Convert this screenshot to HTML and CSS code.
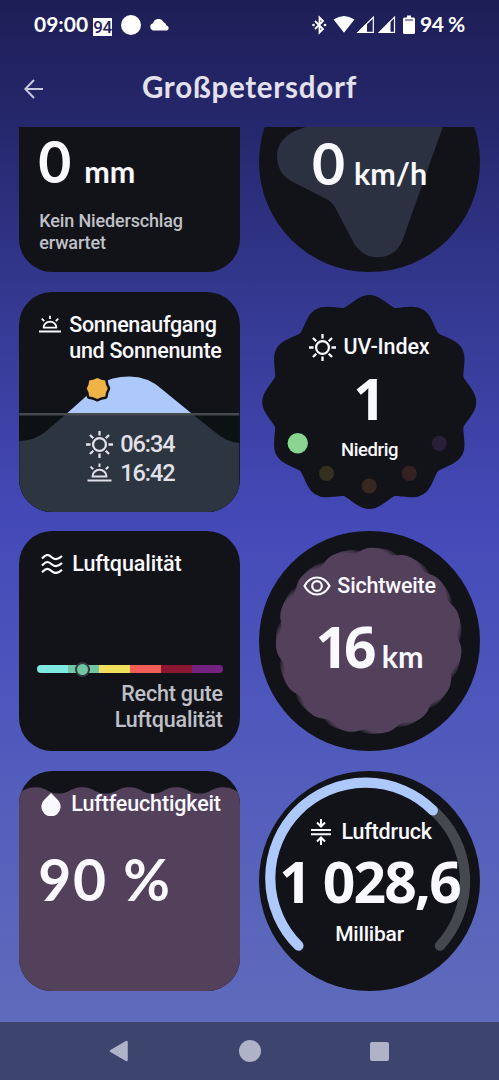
FILE: index.html
```html
<!DOCTYPE html>
<html lang="de">
<head>
<meta charset="utf-8">
<title>Großpetersdorf</title>
<link rel="stylesheet" href="styles.css">
</head>
<body>
<svg width="0" height="0" class="defs">
  <defs>
    <symbol id="sun" viewBox="0 0 26 26"><g fill="none" stroke="currentColor" stroke-width="2.2"><circle cx="13" cy="13" r="6.2"/><path d="M13 0v4.4M13 21.6V26M0 13h4.4M21.6 13H26M3.8 3.8l3.2 3.2M19 19l3.2 3.2M22.2 3.8L19 7M7 19l-3.2 3.2"/></g></symbol>
    <symbol id="rise" viewBox="0 0 24 20"><g fill="none" stroke="currentColor" stroke-width="2"><path d="M0 17.6h24M4.2 13.4h15.6M5 13.4a7 6.6 0 0 1 14 0M12 .5v3.6M3 3.6l2.7 2.7M21 3.6l-2.7 2.7"/></g></symbol>
    <path id="petal" d="M0 0L-30 -92.5C-24 -93.5-22 -96.500-12 -103Q0 -111 12 -103C22 -96.500 24 -93.500 30 -92.500Z"/>
    <path id="lobe" d="M0 0L-21.5 -85.5C-13 -87.5-11 -93.2 0 -93.2S13 -87.5 21.5 -85.5Z"/>
    <g id="flower">
      <circle r="88"/>
      <use href="#lobe" transform="rotate(2.7)"/><use href="#lobe" transform="rotate(26.7)"/><use href="#lobe" transform="rotate(50.7)"/><use href="#lobe" transform="rotate(74.7)"/><use href="#lobe" transform="rotate(98.7)"/><use href="#lobe" transform="rotate(122.7)"/><use href="#lobe" transform="rotate(146.7)"/><use href="#lobe" transform="rotate(170.7)"/><use href="#lobe" transform="rotate(194.7)"/><use href="#lobe" transform="rotate(218.7)"/><use href="#lobe" transform="rotate(242.7)"/><use href="#lobe" transform="rotate(266.7)"/><use href="#lobe" transform="rotate(290.7)"/><use href="#lobe" transform="rotate(314.7)"/><use href="#lobe" transform="rotate(338.7)"/>
    </g>
  </defs>
</svg>
<div class="phone">
  <div class="status">
    <div class="status-left">
      <span class="clock">09:00</span>
      <span class="badge">94</span>
      <span class="dot"></span>
      <svg class="cloud" width="19" height="12" viewBox="1 0.500 16.500 10.500" preserveAspectRatio="none"><path fill="#fff" d="M3.5 10.5a3.2 3.2 0 0 1 .2-6.2A4.8 4.8 0 0 1 12.800 3.300 3.500 3.500 0 0 1 15.300 6.100 2.300 2.300 0 0 1 15.800 10.500Z"/></svg>
    </div>
    <div class="status-right">
      <svg width="84" height="20" viewBox="0 0 84 20">
        <path d="M3 6l8 8-3.500 3.500V2.500L11 6l-8 8" fill="none" stroke="#fff" stroke-width="1.800"/>
        <circle cx="1.500" cy="10" r="1.300" fill="#fff"/><circle cx="13" cy="10" r="1.300" fill="#fff"/>
        <path d="M21.600 4.500Q32 -2.500 42.400 4.500L32 17.800Z" fill="#fff"/>
        <path d="M61.300 2.200V17.300H46Z" fill="none" stroke="#fff" stroke-width="1.200"/><path d="M45 17.900L55 8V17.900Z" fill="#fff"/>
        <path d="M82.500 2.200V17.300H67.500Z" fill="none" stroke="#fff" stroke-width="1.200"/><path d="M66 17.900L78.500 5.500V17.900Z" fill="#fff"/>
      </svg>
      <svg class="battery" width="12" height="20" viewBox="0 0 12 20"><path fill="#fff" d="M4 .5h4v2h2.500a1.500 1.500 0 0 1 1.500 1.500V17.500a1.500 1.500 0 0 1-1.500 1.500h-9A1.500 1.500 0 0 1 0 17.500V4a1.500 1.500 0 0 1 1.500-1.500H4Z"/><path d="M2 5h8" stroke="#22245f" stroke-width="1"/></svg>
      <span class="percent">94 %</span>
    </div>
  </div>

  <header class="bar">
    <svg width="20" height="20" viewBox="0 0 20 20"><path d="M19 10H1.500M10 1L1.300 10 10 19" fill="none" stroke="#c9c9dc" stroke-width="2"/></svg>
    <h1>Großpetersdorf</h1>
  </header>

  <main class="scroll">
    <section class="card square rain">
      <div class="value"><b>0</b><span class="unit">mm</span></div>
      <p class="note">Kein Niederschlag<br>erwartet</p>
    </section>

    <section class="card round wind">
      <svg class="art" viewBox="0 0 220 220"><path fill="#2b3140" d="M47.800 74.800C30 79 17.800 89 17.800 104C17.800 115 23 124 31 128.500L66 146.500Q73 149.500 77 157.500L95 192C101 201 109 205.300 118 205.300C129 205.300 138 200 143 189L183.500 75L190 50H60Z"/></svg>
      <div class="value"><b>0</b><span class="unit">km/h</span></div>
    </section>

    <section class="card square solar">
      <svg class="art" viewBox="0 0 220 220">
        <path fill="#0c1113" d="M0 122h220v98H0z"/>
        <path fill="#2d3540" d="M0 149C11 148.500 18 146 27 139L47 122H173L195 139.500Q207 150 220 151V220H0Z"/>
        <path fill="#adc8fb" d="M47 122L80 92.500Q92 84.500 110 84.500Q129 84.500 143 97.500L173 122Z"/>
        <path stroke="#46494e" stroke-width="2.600" d="M0 122.300h220"/>
        <path fill="#efb347" stroke="#121318" stroke-width="5" paint-order="stroke" stroke-linejoin="round" d="M78 86L82 87.800 86 88.500 86.700 92.500 88.500 96.500 86.700 100.500 86 104.500 82 105.200 78 107 74 105.200 70 104.500 69.300 100.500 67.500 96.500 69.300 92.500 70 88.500 74 87.800Z"/>
      </svg>
      <h2><svg width="22" height="19"><use href="#rise"/></svg><span>Sonnenaufgang<br><i>und Sonnenunte</i></span></h2>
      <div class="times">
        <div><svg width="27" height="27"><use href="#sun"/></svg><span>06:34</span></div>
        <div><svg width="25" height="20"><use href="#rise"/></svg><span>16:42</span></div>
      </div>
    </section>

    <section class="card shape uv">
      <svg class="art" viewBox="0 0 220 220">
        <g fill="#121318" transform="translate(110 110)">
          <circle r="97"/>
          <use href="#petal"/><use href="#petal" transform="rotate(30)"/><use href="#petal" transform="rotate(60)"/><use href="#petal" transform="rotate(90)"/><use href="#petal" transform="rotate(120)"/><use href="#petal" transform="rotate(150)"/><use href="#petal" transform="rotate(180)"/><use href="#petal" transform="rotate(210)"/><use href="#petal" transform="rotate(240)"/><use href="#petal" transform="rotate(270)"/><use href="#petal" transform="rotate(300)"/><use href="#petal" transform="rotate(330)"/>
        </g>
        <circle cx="38.500" cy="151.300" r="10.200" fill="#88d68f"/>
        <circle cx="67.300" cy="181.300" r="7.600" fill="#352f20"/>
        <circle cx="110" cy="194" r="7.600" fill="#36271f"/>
        <circle cx="150" cy="181.300" r="7.600" fill="#332123"/>
        <circle cx="180" cy="151.300" r="7.600" fill="#281f38"/>
      </svg>
      <h2><svg width="27" height="27"><use href="#sun"/></svg><span>UV-Index</span></h2>
      <div class="value"><b>1</b></div>
      <p class="caption">Niedrig</p>
    </section>

    <section class="card square air">
      <h2><svg width="22" height="20" viewBox="0 0 22 20"><path d="M1 4.500C6-1 8 1 11 3.500S17 6 21 2M1 11.500C6 6 8 8 11 10.500S17 13 21 9M1 18.300C6 12.800 8 14.800 11 17.300S17 19.800 21 15.800" fill="none" stroke="currentColor" stroke-width="2.200"/></svg><span>Luftqualität</span></h2>
      <div class="scale"><i class="c1"></i><i class="c2"></i><i class="c3"></i><i class="c4"></i><i class="c5"></i><i class="c6"></i><span class="knob"></span></div>
      <p class="quality">Recht gute<br><span>Luftqualität</span></p>
    </section>

    <section class="card round sight">
      <svg class="art" viewBox="0 0 220 220">
        <g transform="translate(109.800 109.800)">
          <use href="#flower" fill="#2e2836" transform="rotate(7)"/>
          <use href="#flower" fill="#413548" transform="rotate(3.500)"/>
          <use href="#flower" fill="#53405b"/>
        </g>
      </svg>
      <h2><svg width="28" height="20" viewBox="0 0 28 20"><g fill="none" stroke="currentColor" stroke-width="2.200"><path d="M1.500 10Q6 1.500 14 1.500T26.500 10Q22 18.500 14 18.500T1.500 10Z"/><circle cx="14" cy="10" r="4.800"/></g></svg><span>Sichtweite</span></h2>
      <div class="value"><b>16</b><span class="unit">km</span></div>
    </section>

    <section class="card square humid">
      <svg class="art" viewBox="0 0 220 220"><path fill="#53405b" d="M-7.500 22.500C4 22.500 4 16.300 16 16.300S28 22.500 39.500 22.500 51 16.300 63 16.300 75 22.500 86.500 22.500 98 16.300 110 16.300 122 22.500 133.500 22.500 145 16.300 157 16.300 169 22.500 180.500 22.500 192 16.300 204 16.300 216 22.500 227.500 22.500V220H-7.500Z"/></svg>
      <h2><svg width="20" height="23" viewBox="0 0 20 23"><path fill="currentColor" d="M10 0L17 7A9.700 9.700 0 1 1 3 7Z"/></svg><span>Luftfeuchtigkeit</span></h2>
      <div class="value"><b>90 %</b></div>
    </section>

    <section class="card round pressure">
      <svg class="art" viewBox="0 0 220 220"><g fill="none" stroke-width="10.200" stroke-linecap="round"><path stroke="#45484f" d="M173.600 39A95 95 0 0 1 180.700 174.700"/><path stroke="#adc8fb" d="M39.200 174.700A95 95 0 1 1 173.600 39.300"/></g></svg>
      <h2><svg width="20" height="26" viewBox="0 0 20 26"><path d="M0 11h20M0 15.300h20M10 0v7M6 3.500l4 4 4-4M10 26v-7M6 22.500l4-4 4 4" fill="none" stroke="currentColor" stroke-width="2"/></svg><span>Luftdruck</span></h2>
      <div class="value"><b>1 028,6</b></div>
      <p class="caption">Millibar</p>
    </section>
  </main>

  <nav class="nav">
    <svg width="20" height="22" viewBox="0 0 20 22"><path d="M2 11L17.500 2V20Z" fill="#b0b3c7" stroke="#b0b3c7" stroke-width="2.500" stroke-linejoin="round"/></svg>
    <span class="home"></span>
    <span class="recent"></span>
  </nav>
</div>
</body>
</html>
```
FILE: styles.css
```css
* { box-sizing: border-box; margin: 0; padding: 0; }
body { width: 499px; height: 1080px; overflow: hidden; font-family: Roboto, "Liberation Sans", sans-serif; color: #faf9ff; }
.defs { position: absolute; }
svg { display: block; flex: none; }
.phone { display: flex; flex-direction: column; width: 499px; height: 1080px;
  background: linear-gradient(#1e1e56 0, #26286e 130px, #33378d 285px, #4449b8 520px, #525cbc 770px, #5f6bbb 1022px); }

.status { height: 50px; display: flex; justify-content: space-between; align-items: center; padding: 0 34px; font-family: Lato, sans-serif; font-weight: 700; font-size: 21px; line-height: 24px; color: #fff; }
.status-left, .status-right { display: flex; align-items: center; }
.clock { width: 59px; padding-bottom: 2px; letter-spacing: 0; white-space: nowrap; }
.badge { width: 19px; height: 18px; margin-top: 3px; background: #fff; color: #1f205a; font: 500 17px/18px Roboto, sans-serif; letter-spacing: -.5px; text-align: center; }
.dot { width: 20px; height: 20px; border-radius: 50%; background: #fff; margin-left: 9px; }
.cloud { margin-left: 9px; }
.battery { margin: 0 5px 0 7px; }
.percent { width: 45px; padding-bottom: 2px; white-space: nowrap; letter-spacing: -.5px; }

.bar { height: 77px; display: grid; grid-template-columns: 48px 1fr 48px; align-items: center; padding: 0 24px; }
.bar h1 { padding-bottom: 3px; font: 700 29.500px/40px Lato, sans-serif; color: #e3e1ec; text-align: center; letter-spacing: .75px; white-space: nowrap; }

.scroll { height: 895px; overflow: hidden; display: grid; grid-template-columns: 220.500px 220.500px; grid-auto-rows: 220px; gap: 19.700px 19.500px; padding: 0 19.300px 31px; align-content: end; }
.card { position: relative; background: #121318; display: flex; flex-direction: column; overflow: hidden; }
.card > * { position: relative; }
.card > .art { position: absolute; inset: 0; width: 100%; height: 100%; }
.card > svg.art { overflow: visible; }
.square { border-radius: 33px; }
.round { border-radius: 50%; }
.shape { background: none; }
.round, .shape { align-items: center; }

h2 { display: flex; font-weight: 500; font-size: 21.500px; line-height: 26px; letter-spacing: -.1px; white-space: nowrap; }
h2 i { font-style: normal; }
.value { display: flex; align-items: baseline; white-space: nowrap; line-height: 60px; }
.value b { font-family: Lato, sans-serif; font-weight: 700; font-size: 57px; }
.unit { font-family: Lato, sans-serif; font-weight: 700; font-size: 30.500px; }
.caption { font-weight: 500; line-height: 24px; }

.rain { padding: 79px 20px 0; }
.rain .value b { width: 46px; margin-left: -1px; }
.note { margin-top: 9px; font-size: 18px; line-height: 22px; font-weight: 500; letter-spacing: -.15px; color: #c0c1c8; }
.wind { padding-top: 81px; }
.wind .unit { margin-left: 9px; }

.solar { padding: 20px 0 0 20px; }
.solar h2 { gap: 8px; letter-spacing: -.32px; }
.solar h2 svg { margin-top: 3px; }
.times { margin: 66px 0 0 47px; color: #e2e1ea; font-size: 23.500px; font-weight: 500; letter-spacing: -1.100px; }
.times div { display: flex; align-items: center; height: 29px; gap: 7px; }
.times svg { width: 27px; }

.uv { padding-top: 42px; }
.uv h2 { gap: 7px; }
.uv .value { margin-top: 7px; }
.uv .value b, .sight .value b, .pressure .value b { font-family: "Open Sans", sans-serif; }
.uv .caption { font-size: 18.500px; margin-top: 10px; letter-spacing: -.4px; }

.air { padding: 20px 17px 0 18px; }
.air h2 { padding-left: 4px; gap: 9px; }
.air h2 svg { margin-top: 3px; }
.scale { display: flex; margin-top: 88px; height: 7.500px; }
.scale i { flex: 1; }
.c1 { background: #7eeae2; border-radius: 4px 0 0 4px; }
.c2 { background: #72c6a6; }
.c3 { background: #f0e05c; }
.c4 { background: #f25d57; }
.c5 { background: #8c1732; }
.c6 { background: #742480; border-radius: 0 4px 4px 0; }
.knob { position: absolute; left: 38px; top: -3.800px; width: 15px; height: 15px; border-radius: 50%; background: #72c6a6; border: 2px solid #34393f; }
.quality { margin-top: 8px; text-align: right; font-size: 21.500px; line-height: 26.500px; font-weight: 500; letter-spacing: -.2px; color: #bfc0c7; }

.sight { padding-top: 42px; }
.sight h2 { gap: 6px; letter-spacing: -.2px; }
.sight h2 svg { margin-top: 3px; }
.sight .value { margin-top: 17px; }
.sight .value b { letter-spacing: -4px; }
.sight .unit { margin-left: 9px; }

.humid { padding: 20px 0 0 20px; }
.humid h2 { padding-left: 2px; gap: 10px; letter-spacing: -.15px; }
.humid h2 svg { margin-top: 2px; }
.humid .value { margin-top: 32px; letter-spacing: 1.700px; }
.humid .value b { margin-left: -1px; }

.pressure { padding-top: 48px; }
.pressure h2 { gap: 10px; padding-left: 4px; letter-spacing: -.2px; }
.pressure .value { margin-top: 6px; letter-spacing: -1.900px; }
.pressure .caption { font-size: 21px; margin-top: 11px; letter-spacing: -.2px; }

.nav { height: 58px; background: #3d446e; display: flex; justify-content: space-between; align-items: center; padding: 0 110px 0 109px; }
.home { width: 22px; height: 22px; border-radius: 50%; background: #b0b3c7; }
.recent { width: 19px; height: 19px; border-radius: 2px; background: #b0b3c7; }
```
